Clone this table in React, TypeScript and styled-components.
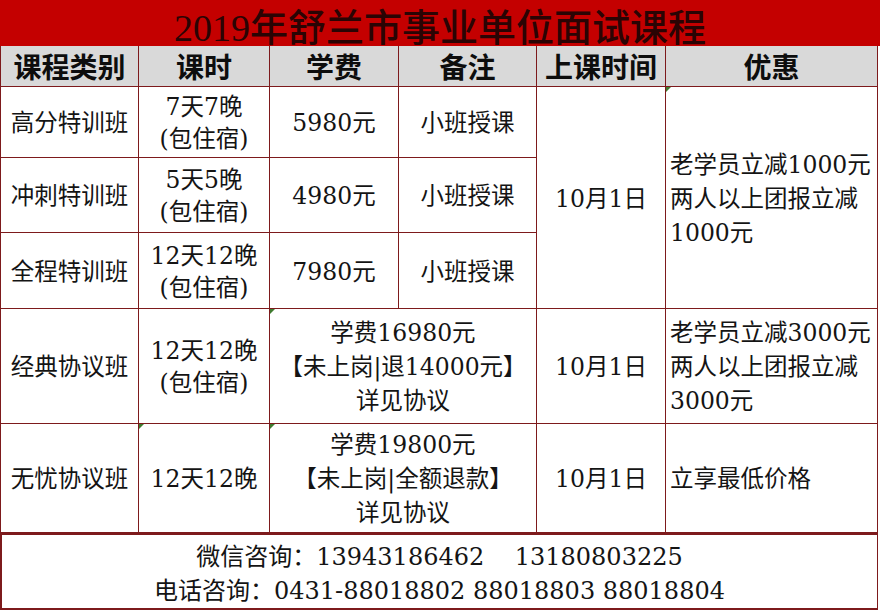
import React from "react";
import styled, { createGlobalStyle, css } from "styled-components";

const LINE = "#7d1a1c";

const GlobalStyle = createGlobalStyle`
  html, body {
    margin: 0;
    padding: 0;
    background: #ffffff;
  }
  * {
    box-sizing: border-box;
  }
`;

type CellProps = {
  $col: number;
  $row: number;
  $colSpan?: number;
  $rowSpan?: number;
  $left?: boolean;
  $head?: boolean;
  $marker?: boolean;
  $lh?: number;
};

const App = () => {
  return (
    <>
      <GlobalStyle />
      <Page>
        <Title>2019年舒兰市事业单位面试课程</Title>

        <Sheet>
          {["课程类别", "课时", "学费", "备注", "上课时间", "优惠"].map((h, i) => (
            <Cell key={h} $head $col={i + 1} $row={1}>
              {h}
            </Cell>
          ))}

          <Cell $col={1} $row={2}>高分特训班</Cell>
          <Cell $col={2} $row={2} $lh={32}>
            7天7晚
            <br />
            (包住宿)
          </Cell>
          <Cell $col={3} $row={2}>5980元</Cell>
          <Cell $col={4} $row={2}>小班授课</Cell>

          <Cell $col={1} $row={3}>冲刺特训班</Cell>
          <Cell $col={2} $row={3} $lh={32}>
            5天5晚
            <br />
            (包住宿)
          </Cell>
          <Cell $col={3} $row={3}>4980元</Cell>
          <Cell $col={4} $row={3}>小班授课</Cell>

          <Cell $col={1} $row={4}>全程特训班</Cell>
          <Cell $col={2} $row={4} $lh={32}>
            12天12晚
            <br />
            (包住宿)
          </Cell>
          <Cell $col={3} $row={4}>7980元</Cell>
          <Cell $col={4} $row={4}>小班授课</Cell>

          <Cell $col={5} $row={2} $rowSpan={3}>10月1日</Cell>
          <Cell $col={6} $row={2} $rowSpan={3} $left $marker $lh={34}>
            老学员立减1000元
            <br />
            两人以上团报立减
            <br />
            1000元
          </Cell>

          <Cell $col={1} $row={5}>经典协议班</Cell>
          <Cell $col={2} $row={5} $lh={32}>
            12天12晚
            <br />
            (包住宿)
          </Cell>
          <Cell $col={3} $row={5} $colSpan={2} $marker $lh={34}>
            学费16980元
            <br />
            【未上岗|退14000元】
            <br />
            详见协议
          </Cell>
          <Cell $col={5} $row={5}>10月1日</Cell>
          <Cell $col={6} $row={5} $left $lh={34}>
            老学员立减3000元
            <br />
            两人以上团报立减
            <br />
            3000元
          </Cell>

          <Cell $col={1} $row={6}>无忧协议班</Cell>
          <Cell $col={2} $row={6} $marker>12天12晚</Cell>
          <Cell $col={3} $row={6} $colSpan={2} $marker $lh={34}>
            学费19800元
            <br />
            【未上岗|全额退款】
            <br />
            详见协议
          </Cell>
          <Cell $col={5} $row={6}>10月1日</Cell>
          <Cell $col={6} $row={6} $left>立享最低价格</Cell>
        </Sheet>

        <Footer>
          <FooterLine>微信咨询：13943186462&nbsp;&nbsp;&nbsp;&nbsp;13180803225</FooterLine>
          <FooterLine>电话咨询：0431-88018802 88018803 88018804</FooterLine>
        </Footer>
      </Page>
    </>
  );
};

export default App;

const Page = styled.div`
  width: 880px;
  height: 610px;
  display: flex;
  flex-direction: column;
  background: #ffffff;
  font-family: "DejaVu Serif", "Noto Sans CJK SC", serif;
  color: #141414;
`;

const Title = styled.div`
  height: 46px;
  background: #c40000;
  display: flex;
  align-items: center;
  justify-content: center;
  font-family: "Liberation Serif", "Noto Sans CJK SC", serif;
  font-size: 38px;
  font-weight: 500;
  color: #2a0404;
  padding-top: 3px;
`;

const Sheet = styled.div`
  width: 878px;
  display: grid;
  grid-template-columns: 138px 131px 129px 138px 129px 212px;
  grid-template-rows: 41px 71px 75px 76px 115px 109px;
  border-left: 1px solid ${LINE};
`;

const Cell = styled.div<CellProps>`
  position: relative;
  grid-column: ${(p) => p.$col} / span ${(p) => p.$colSpan || 1};
  grid-row: ${(p) => p.$row} / span ${(p) => p.$rowSpan || 1};
  border-right: 1px solid ${LINE};
  border-bottom: 1px solid ${LINE};
  display: flex;
  flex-direction: column;
  justify-content: center;
  align-items: ${(p) => (p.$left ? "flex-start" : "center")};
  text-align: ${(p) => (p.$left ? "left" : "center")};
  padding-left: ${(p) => (p.$left ? "4px" : "0")};
  padding-top: 2px;
  font-size: 23.5px;
  line-height: ${(p) => (p.$lh ? `${p.$lh}px` : "30px")};
  white-space: nowrap;

  ${(p) =>
    p.$head &&
    css`
      background: #d9d9d9;
      font-family: "Noto Sans CJK SC", sans-serif;
      font-weight: 700;
      font-size: 28px;
      color: #0d0d0d;
      padding-top: 0;
    `}

  ${(p) =>
    p.$marker &&
    css`
      &::before {
        content: "";
        position: absolute;
        left: 0;
        top: 0;
        border-top: 5px solid #3f7b2f;
        border-right: 5px solid transparent;
      }
    `}
`;

const Footer = styled.div`
  width: 878px;
  flex: 1;
  border-top: 2px solid ${LINE};
  border-bottom: 2px solid ${LINE};
  border-left: 2px solid ${LINE};
  border-right: 1px solid ${LINE};
  display: flex;
  flex-direction: column;
  align-items: center;
  justify-content: center;
  padding-top: 4px;
`;

const FooterLine = styled.div`
  font-size: 24px;
  line-height: 34px;
  white-space: nowrap;
`;
